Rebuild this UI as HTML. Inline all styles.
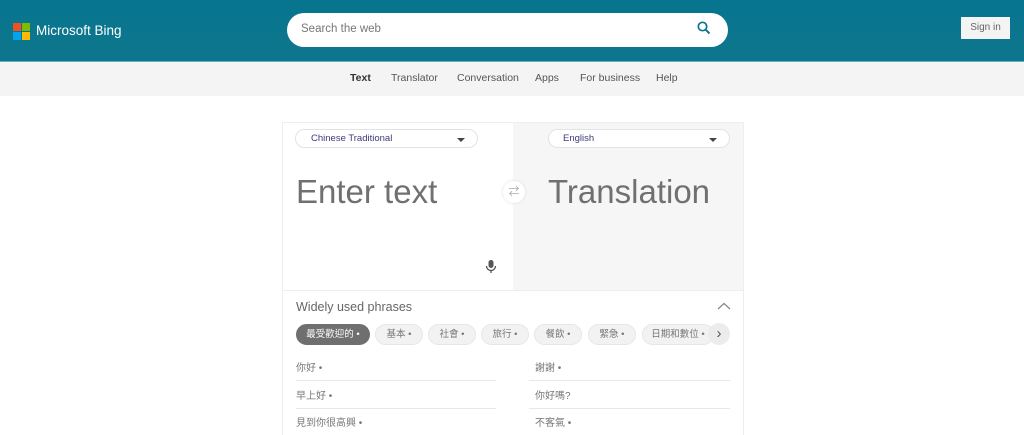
<!DOCTYPE html>
<html><head><meta charset="utf-8"><style>
*{margin:0;padding:0;box-sizing:border-box}
body{width:1024px;height:435px;overflow:hidden;background:#fff;font-family:"Liberation Sans","Noto Sans CJK TC",sans-serif;position:relative}
.hdr{position:absolute;left:0;top:0;width:1024px;height:61px;background:linear-gradient(#07758f,#0e768c)}
.nav{position:absolute;left:0;top:61px;width:1024px;height:35px;background:#f4f4f4;border-top:1px solid #5fb0c0}
.nav span{position:absolute;top:10px;font-size:10.5px;color:#555}
.abs{position:absolute}
.chip{position:absolute;top:324px;height:21px;border-radius:11px;background:#f2f2f2;border:1px solid #e6e6e6;font-size:9.5px;color:#777;text-align:center;line-height:19px}
.ph{position:absolute;font-size:10px;color:#777}
.ln{position:absolute;height:1px;background:#e8e8e8}
</style></head><body>
<div class="hdr"></div>
<div class="abs" style="left:13px;top:23px;width:8px;height:8px;background:#f25022"></div>
<div class="abs" style="left:22px;top:23px;width:8px;height:8px;background:#7fba00"></div>
<div class="abs" style="left:13px;top:32px;width:8px;height:8px;background:#00a4ef"></div>
<div class="abs" style="left:22px;top:32px;width:8px;height:8px;background:#ffb900"></div>
<div class="abs" style="left:36px;top:23px;font-size:13.5px;color:#fff">Microsoft Bing</div>
<div class="abs" style="left:287px;top:13px;width:441px;height:34px;border-radius:17px;background:#fff"></div>
<div class="abs" style="left:301px;top:23px;font-size:11.5px;color:#777">Search the web</div>
<svg class="abs" style="left:696px;top:20px" width="16" height="16" viewBox="0 0 16 16"><circle cx="6.5" cy="6.5" r="4.2" fill="none" stroke="#0e7590" stroke-width="1.7"/><path d="M9.6 9.6L13.5 13.5" stroke="#0e7590" stroke-width="2"/></svg>
<div class="abs" style="left:961px;top:17px;width:49px;height:22px;background:#f4f4f4;font-size:10px;color:#666;text-align:center;line-height:22px">Sign in</div>
<div class="nav"><span style="left:350px;color:#333;font-weight:bold">Text</span><span style="left:391px">Translator</span><span style="left:457px">Conversation</span><span style="left:535px">Apps</span><span style="left:580px">For business</span><span style="left:656px">Help</span></div>
<div class="abs" style="left:282px;top:122px;width:462px;height:313px;border:1px solid #eee;border-bottom:none"></div>
<div class="abs" style="left:513px;top:123px;width:230px;height:167px;background:#f6f6f6"></div>
<div class="abs" style="left:283px;top:290px;width:460px;height:1px;background:#eee"></div>
<div class="abs" style="left:295px;top:129px;width:183px;height:19px;border:1px solid #e3e3e3;border-radius:10px;background:#fff;font-size:9.5px;color:#3d3a7a;padding:3px 0 0 15px">Chinese Traditional</div>
<div class="abs" style="left:457px;top:138px;border:4px solid transparent;border-top:4px solid #444"></div>
<div class="abs" style="left:548px;top:129px;width:182px;height:19px;border:1px solid #e3e3e3;border-radius:10px;background:#fff;font-size:9.5px;color:#3d3a7a;padding:3px 0 0 14px">English</div>
<div class="abs" style="left:709px;top:138px;border:4px solid transparent;border-top:4px solid #444"></div>
<div class="abs" style="left:296px;top:173px;font-size:33px;color:#707070">Enter text</div>
<div class="abs" style="left:548px;top:173px;font-size:33px;color:#707070">Translation</div>
<div class="abs" style="left:503px;top:181px;width:22px;height:22px;border-radius:11px;background:#fff;box-shadow:0 0 3px #ddd;font-size:11px;color:#aaa;text-align:center;line-height:22px">⇄</div>
<svg class="abs" style="left:485px;top:259px" width="12" height="16" viewBox="0 0 12 16"><rect x="3.5" y="1" width="5" height="8" rx="2.5" fill="#555"/><path d="M1.5 7a4.5 4.5 0 0 0 9 0" fill="none" stroke="#555" stroke-width="1.3"/><path d="M6 11.5v2.5" stroke="#555" stroke-width="1.3"/></svg>
<div class="abs" style="left:296px;top:300px;font-size:12.5px;color:#666">Widely used phrases</div>
<svg class="abs" style="left:717px;top:302px" width="14" height="9"><path d="M1 7L7 1.5L13 7" fill="none" stroke="#888" stroke-width="1.2"/></svg>
<div class="chip" style="left:296px;width:74px;background:#6f6f6f;border-color:#6f6f6f;color:#fff">最受歡迎的 •</div>
<div class="chip" style="left:375px;width:48px">基本 •</div>
<div class="chip" style="left:428px;width:48px">社會 •</div>
<div class="chip" style="left:481px;width:48px">旅行 •</div>
<div class="chip" style="left:534px;width:48px">餐飲 •</div>
<div class="chip" style="left:588px;width:48px">緊急 •</div>
<div class="chip" style="left:642px;width:72px">日期和數位 •</div>
<div class="abs" style="left:708px;top:323px;width:22px;height:22px;border-radius:11px;background:#ececec;font-size:15px;color:#555;text-align:center;line-height:21px">›</div>
<div class="ph" style="left:296px;top:359px">你好 •</div>
<div class="ph" style="left:535px;top:359px">謝謝 •</div>
<div class="ln" style="left:296px;top:380px;width:200px"></div>
<div class="ln" style="left:529px;top:380px;width:201px"></div>
<div class="ph" style="left:296px;top:387px">早上好 •</div>
<div class="ph" style="left:535px;top:387px">你好嗎?</div>
<div class="ln" style="left:296px;top:408px;width:200px"></div>
<div class="ln" style="left:529px;top:408px;width:201px"></div>
<div class="ph" style="left:296px;top:414px">見到你很高興 •</div>
<div class="ph" style="left:535px;top:414px">不客氣 •</div>
</body></html>
